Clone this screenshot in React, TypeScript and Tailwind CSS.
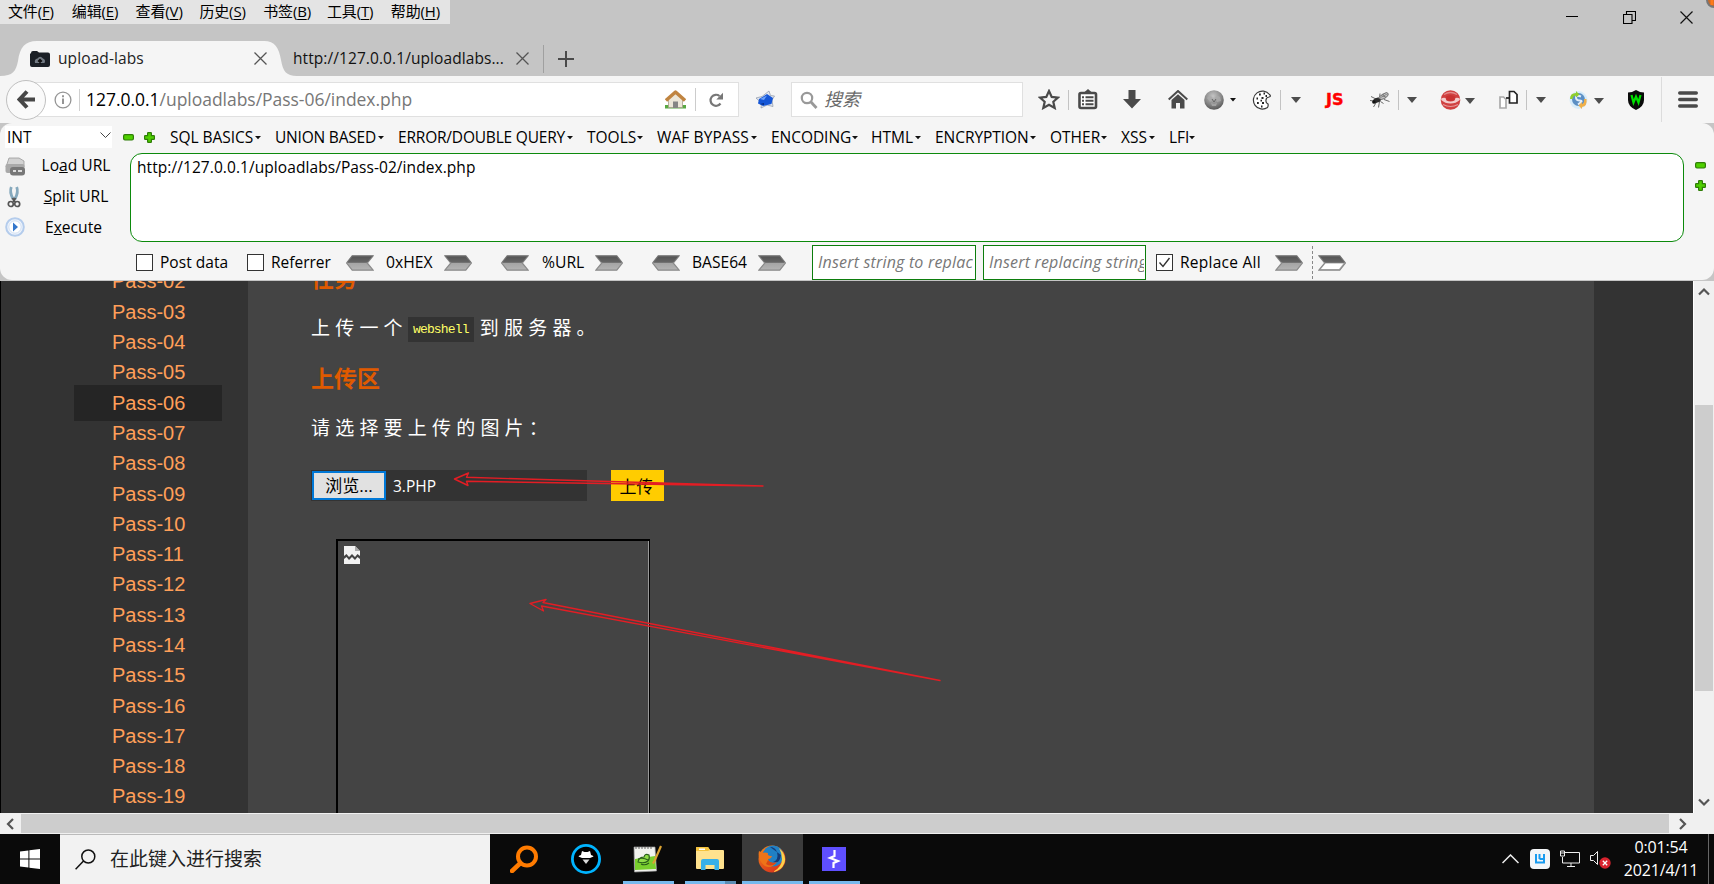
import type { ReactNode } from 'react';

const menus = [
  ['文件', 'F'],
  ['编辑', 'E'],
  ['查看', 'V'],
  ['历史', 'S'],
  ['书签', 'B'],
  ['工具', 'T'],
  ['帮助', 'H'],
];

const hackMenus = [
  { label: 'SQL BASICS', w: 'w-[105px]', t: 'w-[85px] tracking-[-0.05px]' },
  { label: 'UNION BASED', w: 'w-[123px]', t: 'w-[103px] tracking-[-0.2px]' },
  { label: 'ERROR/DOUBLE QUERY', w: 'w-[189px]', t: 'w-[169px] tracking-[-0.2px]' },
  { label: 'TOOLS', w: 'w-[70px]', t: 'w-[50px]' },
  { label: 'WAF BYPASS', w: 'w-[114px]', t: 'w-[94px] tracking-[0.1px]' },
  { label: 'ENCODING', w: 'w-[100px]', t: 'w-[81px] tracking-[-0.05px]' },
  { label: 'HTML', w: 'w-[64px]', t: 'w-[44px]' },
  { label: 'ENCRYPTION', w: 'w-[115px]', t: 'w-[95px] tracking-[-0.05px]' },
  { label: 'OTHER', w: 'w-[71px]', t: 'w-[51px]' },
  { label: 'XSS', w: 'w-[48px]', t: 'w-[28px]' },
  { label: 'LFI', w: 'w-[40px]', t: 'w-[20px]' },
];

const passes = Array.from({ length: 18 }, (_, i) => `Pass-${String(i + 2).padStart(2, '0')}`);

function Caret({ className = '' }: { className?: string }) {
  return (
    <svg className={`shrink-0 ${className}`} width="10" height="6" viewBox="0 0 10 6">
      <path d="M0 0h10L5 6z" fill="#4d4d4d" />
    </svg>
  );
}

function Sep({ className = '' }: { className?: string }) {
  return <div className={`h-5 w-px shrink-0 bg-[#c3c3c3] ${className}`} />;
}

function Cross({ size, color, sw = 1.3 }: { size: number; color: string; sw?: number }) {
  return (
    <svg width={size} height={size} viewBox="0 0 13 13" className="shrink-0">
      <path d="M.5 .5l12 12M12.5 .5l-12 12" stroke={color} strokeWidth={sw} fill="none" />
    </svg>
  );
}

function GreenMinus({ className = '' }: { className?: string }) {
  return (
    <svg className={`shrink-0 ${className}`} width="11" height="7" viewBox="0 0 11 7">
      <rect x=".6" y=".6" width="9.8" height="5.4" rx="1.4" fill="#4fd000" stroke="#2f7d08" strokeWidth="1.2" />
    </svg>
  );
}

function GreenPlus({ className = '' }: { className?: string }) {
  return (
    <svg className={`shrink-0 ${className}`} width="11" height="11" viewBox="0 0 11 11">
      <path d="M3.6 1.2q0-.6.6-.6h2.6q.6 0 .6.6v2.4h2.4q.6 0 .6.6v2.6q0 .6-.6.6H7.400v2.400q0 .6-.6.6H4.200q-.6 0-.6-.6V7.400H1.200q-.6 0-.6-.6V4.200q0-.6.6-.6h2.400z" fill="#4fd000" stroke="#2f7d08" strokeWidth="1.2" />
    </svg>
  );
}

function Chevron({ dir, hollow = false, className = '' }: { dir: 'l' | 'r'; hollow?: boolean; className?: string }) {
  return (
    <svg className={`shrink-0 ${className}`} width="28" height="16" viewBox="0 0 28 16">
      <defs>
        <linearGradient id="chev" x1="0" y1="0" x2="0" y2="1">
          <stop offset="0" stopColor="#4b4b4b" />
          <stop offset=".5" stopColor="#757575" />
          <stop offset=".52" stopColor="#a5a5a5" />
          <stop offset="1" stopColor="#b4b4b4" />
        </linearGradient>
      </defs>
      <g transform={dir === 'l' ? 'matrix(-1 0 0 1 28 0)' : undefined}>
        <path d="M.8 .8h21l5.600 7.200-5.600 7.200H.8l6-7.200z" fill="url(#chev)" stroke="#8a8a8a" strokeWidth="1.200" />
        <path d="M.5 .5h21.500l5 6.500H6z" fill="#5a5a5a" opacity=".5" />
        {hollow && <path d="M7.500 8.500h18L21 14H3z" fill="#fff" />}
      </g>
    </svg>
  );
}

function Check({ checked = false, className = '' }: { checked?: boolean; className?: string }) {
  return (
    <div className={`h-[17px] w-[17px] shrink-0 border border-[#333] bg-white ${className}`}>
      {checked && (
        <svg width="15" height="15" viewBox="0 0 15 15">
          <path d="M2.500 7.500l3.500 4L12.500 3" stroke="#333" strokeWidth="1.400" fill="none" />
        </svg>
      )}
    </div>
  );
}

function Slot({ className, children }: { className: string; children: ReactNode }) {
  return <div className={`shrink-0 whitespace-nowrap ${className}`}>{children}</div>;
}

function TitleBar() {
  return (
    <div className="flex h-[41px] justify-between">
      <div className="flex h-6 w-[450px] items-center bg-[#e4e4e4] pb-[2px] pl-[8px] text-[15px] tracking-[-0.15px]">
        {menus.map(([zh, key]) => (
          <Slot key={key} className="w-[63.800px]">
            {zh}(<u className="underline-offset-2">{key}</u>)
          </Slot>
        ))}
      </div>
      <div className="flex items-start">
        <svg width="12" height="13" viewBox="0 0 12 13" className="mt-[11px]">
          <path d="M0 5.500h12" stroke="#000" />
        </svg>
        <svg width="13" height="13" viewBox="0 0 13 13" className="mt-[11px] ml-[45px]">
          <path d="M.5 3.500h8.500v9h-8.500zM3.500 3.500v-3h9v9h-3.500" stroke="#000" fill="none" strokeWidth="1.100" />
        </svg>
        <div className="mt-[11px] ml-[44px]">
          <Cross size={13} color="#111" sw={1.200} />
        </div>
        <svg width="8" height="9" viewBox="0 0 8 9" className="ml-[13px]">
          <circle cx="8" cy="0" r="7" fill="#c66a2c" stroke="#777" strokeWidth="2" />
          <path d="M6 0v5" stroke="#ff7a1a" strokeWidth="3" />
        </svg>
      </div>
    </div>
  );
}

function TabStrip() {
  return (
    <div className="flex h-[35px]">
      <div className="relative h-[35px] w-[297px] shrink-0">
        <svg className="absolute inset-0" width="297" height="35" viewBox="0 0 297 35">
          <path d="M0 35C13 35 16 30 18 20C20 6 25 0 37 0H264C275 0 279 7 281 19C283 30 286 35 297 35z" fill="#f5f5f5" />
        </svg>
        <div className="relative flex h-[35px] items-center pl-[30px] text-[15.500px] text-[#222]">
          <svg width="20" height="16" viewBox="0 0 20 16" className="shrink-0">
            <path d="M1 2q0-2 2-2h4l2 1.500h9q2 0 2 2V14q0 2-2 2H2q-2 0-2-2V3z" fill="#1b2026" />
            <path d="M5 12q-1-4 2.500-4.500Q10 4 13 7.500q3 1 1.500 4.500z" fill="#737b84" />
            <path d="M10 13V9M8 10.500l2-2 2 2" stroke="#111" strokeWidth="1.500" fill="none" />
          </svg>
          <Slot className="ml-2 w-[196px] tracking-[0.1px]">upload-labs</Slot>
          <Cross size={13} color="#555" />
        </div>
      </div>
      <div className="flex items-center text-[15.500px] text-[#111]">
        <Slot className="-ml-[4px] w-[223px] tracking-[0.08px]">http://127.0.0.1/uploadlabs...</Slot>
        <Cross size={13} color="#555" />
        <div className="mt-px ml-[14px] h-7 w-px bg-[#a0a0a0]" />
        <svg width="16" height="16" viewBox="0 0 16 16" className="ml-[14px]">
          <path d="M8 0v16M0 8h16" stroke="#4a4a4a" strokeWidth="2" />
        </svg>
      </div>
    </div>
  );
}

function NavBar() {
  return (
    <div className="flex h-[47px] items-center bg-[#f5f5f5]">
      <div className="z-10 ml-[6px] flex h-10 w-10 shrink-0 items-center justify-center rounded-full border border-[#c0c0c0] bg-[#fafafa]">
        <svg width="18" height="19" viewBox="0 0 18 19">
          <path d="M10 1.500L2.500 9.500l7.500 8M3 9.500h15" stroke="#474747" strokeWidth="4" fill="none" />
        </svg>
      </div>
      <div className="-ml-[20px] flex h-[35px] w-[713px] shrink-0 items-center border border-[#e0e0e0] bg-white pl-[27px]">
        <svg width="18" height="18" viewBox="0 0 18 18" className="shrink-0">
          <circle cx="9" cy="9" r="7.900" fill="none" stroke="#959595" strokeWidth="1.300" />
          <path d="M9 7.500V13M9 4.200v2" stroke="#959595" strokeWidth="2" />
        </svg>
        <div className="ml-[7px] h-[22px] w-px shrink-0 bg-[#d0d0d0]" />
        <Slot className="ml-[6px] w-[579px] text-[17.500px] tracking-[-0.03px] text-[#777]">
          <span className="text-black">127.0.0.1</span>/uploadlabs/Pass-06/index.php
        </Slot>
        <svg width="21" height="19" viewBox="0 0 21 19" className="shrink-0">
          <path d="M0 15h21v3.500H0z" fill="#58a942" />
          <path d="M3.500 8L10.500 2l7 6v9.500h-14z" fill="#ece6d8" stroke="#a99e8c" strokeWidth=".8" />
          <path d="M1 10.500L10.500 2 20 10.500" stroke="#c08440" strokeWidth="3.400" fill="none" strokeLinejoin="round" />
          <path d="M8 11.500h5v6.500H8z" fill="#858585" />
        </svg>
        <div className="ml-[9px] h-[23px] w-px bg-[#ccc]" />
        <svg width="15" height="16" viewBox="0 0 15 16" className="ml-[13px] shrink-0">
          <path d="M11.500 11.500A5.500 5.500 0 1 1 10.500 4" stroke="#777" strokeWidth="2.200" fill="none" />
          <path d="M14 .8v6.700H7.300z" fill="#777" />
        </svg>
      </div>
      <svg width="20" height="19" viewBox="0 0 20 19" className="ml-[16px] shrink-0">
        <path d="M14 1l1.500 4.500 4 .5-2.500 4 1 6.500-6-1.500-6 3 .5-5L1 8l6-1.500z" fill="#e4e8f0" stroke="#8995a8" strokeWidth=".7" />
        <path d="M4 9l8-5 6 4-1.500 6L8 16l-5-2.500z" fill="#1556d6" />
        <path d="M5 9l7-3.500L9 10z" fill="#6ea2fa" />
        <path d="M5 14l4-1v2z" fill="#0a2d80" />
      </svg>
      <div className="ml-[16px] flex h-[35px] w-[232px] shrink-0 items-center border border-[#e0e0e0] bg-white pl-[8px]">
        <svg width="18" height="18" viewBox="0 0 18 18">
          <circle cx="7" cy="7" r="5.200" stroke="#999" strokeWidth="2.200" fill="none" />
          <path d="M11 11l5.500 6" stroke="#999" strokeWidth="2.800" />
        </svg>
        <span className="ml-[6px] text-[18px] text-[#6a6a6a] italic">搜索</span>
      </div>
      <svg width="22" height="21" viewBox="0 0 22 21" className="ml-[15px] shrink-0">
        <path d="M11 2l2.700 5.900 6.300.7-4.700 4.200 1.400 6.200L11 15.800 5.300 19l1.400-6.200L2 8.600l6.300-.7z" fill="none" stroke="#4a4a4a" strokeWidth="2.200" />
      </svg>
      <Sep className="ml-[8px]" />
      <svg width="20" height="21" viewBox="0 0 20 21" className="ml-[9px] shrink-0">
        <path d="M6 3.500L10 0l4 3.500V4H6z" fill="#4a4a4a" />
        <rect x="1.500" y="4" width="16.500" height="15" rx="1.500" fill="#fff" stroke="#4a4a4a" strokeWidth="2.600" />
        <path d="M4 8.200h2M7.500 8.200h8M4 11.700h2M7.500 11.700h8M4 15.200h2M7.500 15.200h8" stroke="#4a4a4a" strokeWidth="2" />
      </svg>
      <svg width="18" height="19" viewBox="0 0 18 19" className="ml-[25px] shrink-0">
        <path d="M5.500 0h7v9H18l-9 9.500L0 9h5.500z" fill="#4a4a4a" />
      </svg>
      <svg width="20" height="19" viewBox="0 0 20 19" className="ml-[27px] shrink-0">
        <path d="M.7 9.500L10 1l9.300 8.500" stroke="#4a4a4a" strokeWidth="2" fill="none" />
        <path d="M3.500 10L10 4.200l6.500 5.800v8.500h-4.500V13H8v5.500H3.500z" fill="#4a4a4a" />
      </svg>
      <svg width="20" height="20" viewBox="0 0 20 20" className="ml-[16px] shrink-0">
        <defs>
          <radialGradient id="ball" cx=".45" cy=".3" r=".75">
            <stop offset="0" stopColor="#c4c4c4" />
            <stop offset=".6" stopColor="#868686" />
            <stop offset="1" stopColor="#4e4e4e" />
          </radialGradient>
        </defs>
        <circle cx="10" cy="10" r="9.800" fill="url(#ball)" />
        <path d="M3 8q2-3 5-1l1 3-3 2zM11 7q3-2 5 0l1 4-4 1zM7 13l3 1 3-1-1 3H8z" fill="#aaa" opacity=".8" />
        <path d="M8 9l2 3 2-3" stroke="#666" fill="none" />
      </svg>
      <svg width="6" height="4" viewBox="0 0 6 4" className="ml-[6px] shrink-0">
        <path d="M0 0h6L3 3.500z" fill="#111" />
      </svg>
      <svg width="20" height="20" viewBox="0 0 20 20" className="ml-[16px] shrink-0">
        <path d="M17.500 4.500A9 9 0 1 0 15.500 17.500q1-1.500.5-3.500-2.500-1-2-4 0-2.500 3-3 2.500-.5.5-2.500z" fill="#fff" stroke="#3a3a3a" strokeWidth="1.200" />
        <path d="M7 4.500h1.800M11.500 3.500h1.500M13.500 6H15M4.500 8.500H6M9.500 8h2M5 13h1.800M10 13h2M8.500 10.700H10M9 16.500h1.500" stroke="#222" strokeWidth="1.800" />
      </svg>
      <Sep className="ml-[8px]" />
      <Caret className="ml-[10px]" />
      <Slot className="ml-[24px] w-[24px] font-['DejaVu_Sans'] text-[16px] leading-5 font-bold text-[#f00] [-webkit-text-stroke:0.4px_#f00]">
        <span className="ml-px">JS</span>
      </Slot>
      <svg width="20" height="18" viewBox="0 0 20 18" className="ml-[21px] shrink-0">
        <path d="M1 5.500l6 3M3.500 16l3-5M8.500 16.500l1-6M10 2.500l-.5 5M13.500 12.500l-3-2M0 9.500l4 .5M14 8.500l5.500 2" stroke="#444" strokeWidth=".8" fill="none" />
        <path d="M3 9q2-2.500 5-2.500L11 8q0 3-3.500 3.500L4 12.500z" fill="#2a2a2a" />
        <path d="M8.500 7Q11 3 16.500 1.500q2.500.5 1.500 3-3 4-7 4z" fill="#c4c4c4" stroke="#555" strokeWidth=".8" />
        <path d="M10 7l7-4M11 4.500l5 1.500M13 3l2 3.500" stroke="#666" strokeWidth=".6" />
        <circle cx="3.800" cy="11" r="1.700" fill="#111" />
      </svg>
      <Sep className="ml-[8px]" />
      <Caret className="ml-[8px]" />
      <svg width="21" height="20" viewBox="0 0 21 20" className="ml-[23px] shrink-0">
        <circle cx="10.500" cy="10" r="9.800" fill="#d04040" />
        <path d="M4 4.500q6.500-4 13 0" stroke="#e38a8a" strokeWidth="1.300" fill="none" />
        <path d="M1.200 8.500q2-1 4.300-.5l1 2.500q4 2 8 0l1-2.500q2.300-.5 4.300.5v1.500q-4 3.500-9.300 3.500t-9.300-3.500z" fill="#f3cccc" />
        <path d="M6 6.500q4.500-3 9 0l-.5 3.500q-4 2-8 0z" fill="#c93232" />
        <path d="M3 14.500q7.500 4 15 0" stroke="#e69a9a" strokeWidth="1.200" fill="none" />
      </svg>
      <Caret className="mt-[2px] ml-[4px]" />
      <svg width="19" height="20" viewBox="0 0 19 20" className="ml-[24px] shrink-0">
        <path d="M1 7h3.500l2.500 2.500V18H1z" fill="#fff" stroke="#aaa" strokeWidth="1.700" />
        <path d="M10.500 1.500h4.500L18 4.500V13h-7.500z" fill="#fff" stroke="#222" strokeWidth="1.700" />
        <path d="M7 8h3.500" stroke="#222" strokeWidth="1.700" />
      </svg>
      <Sep className="ml-[8px]" />
      <Caret className="ml-[9px]" />
      <svg width="20" height="20" viewBox="0 0 20 20" className="ml-[23px] shrink-0">
        <circle cx="9.500" cy="10" r="9" fill="#d7ecfa" />
        <circle cx="9.500" cy="9.500" r="6.500" fill="#5b8fc4" />
        <path d="M12 6.500q-5-2-5 1t4 3-2 4" stroke="#e4eef9" strokeWidth="2" fill="none" />
        <path d="M1 9Q1 3 7 3V1l3.500 3.500L7 7.500V5.500Q4 5.500 3.500 9z" fill="#8fce2c" />
        <path d="M17.500 9q1 7-4.500 8v2l-3.500-3.500L13 12v2q2.500-.5 2-5z" fill="#f0b04a" />
      </svg>
      <Caret className="mt-[2px] ml-[5px]" />
      <svg width="18" height="20" viewBox="0 0 18 20" className="ml-[23px] shrink-0">
        <path d="M9 0q4 2.500 8 2.500V10q0 6.500-8 10-8-3.500-8-10V2.500Q5 2.500 9 0z" fill="#0a0a0a" />
        <path d="M4.500 5l2 7.500L9 6.500l2.500 6 2-7.500" stroke="#00e000" strokeWidth="2.200" fill="none" />
      </svg>
      <div className="ml-[16px] h-[45px] w-px bg-[#dcdcdc]" />
      <svg width="20" height="17" viewBox="0 0 20 17" className="ml-[16px] shrink-0">
        <path d="M1.700 2h16.600M1.700 8.500h16.600M1.700 15h16.600" stroke="#4a4a4a" strokeWidth="3.400" strokeLinecap="round" />
      </svg>
    </div>
  );
}

function SideAction({ icon, children }: { icon: ReactNode; children: ReactNode }) {
  return (
    <div className="flex h-[31px] items-center pl-[4px]">
      <div className="flex w-[22px] justify-center">{icon}</div>
      <div className="ml-[10px] w-[80px] pb-[2px] text-center text-[15.600px] whitespace-nowrap">{children}</div>
    </div>
  );
}

function HackBar() {
  return (
    <div className="h-[158px] shrink-0 overflow-hidden bg-[#c5c5c5]">
      <div className="flex h-[157px] flex-col rounded-[12px] bg-[#f5f5f5]">
        <div className="flex h-[28px] items-center pl-[5px] text-[15.500px] text-black">
          <div className="flex h-[22px] w-[107px] shrink-0 items-center justify-between bg-white pr-[1px] pl-[2px]">
            <span className="mt-[2px]">INT</span>
            <svg width="11" height="7" viewBox="0 0 11 7" className="mb-1">
              <path d="M.5 .5l5 5 5-5" stroke="#444" fill="none" />
            </svg>
          </div>
          <GreenMinus className="ml-[11px]" />
          <GreenPlus className="ml-[10px]" />
          <div className="mt-[2px] ml-[15px] flex">
            {hackMenus.map((m) => (
              <Slot key={m.label} className={`flex items-center ${m.w}`}>
                <span className={m.t}>{m.label}</span>
                <svg width="6" height="4" viewBox="0 0 6 4" className="shrink-0">
                  <path d="M0 0h6L3 3.200z" fill="#111" />
                </svg>
              </Slot>
            ))}
          </div>
        </div>
        <div className="flex h-[91px] pt-[2px]">
          <div className="-mt-[2px] w-[130px] shrink-0">
            <SideAction
              icon={
                <svg width="21" height="19" viewBox="0 0 21 19">
                  <path d="M4 1h10l5 3v6H1z" fill="#d2d2d2" stroke="#999" strokeWidth=".8" />
                  <rect x=".5" y="7" width="19" height="9" rx="2" fill="#a9a9a9" />
                  <rect x="5" y="10" width="15" height="8.500" rx="3" fill="#777" />
                  <path d="M8 14h3M13 14h4" stroke="#ddd" strokeWidth="2" />
                </svg>
              }
            >
              Lo<u>a</u>d URL
            </SideAction>
            <SideAction
              icon={
                <svg width="14" height="22" viewBox="0 0 14 22" className="mr-[3px] mb-[2px]">
                  <path d="M4.300 1q-2 5 1.700 12M9.700 1q2 5-1.700 12" stroke="#86a9bd" strokeWidth="2.800" fill="none" />
                  <path d="M5.500 12L8 16M8.500 12L6 16" stroke="#555" strokeWidth="2" />
                  <circle cx="3.800" cy="18" r="2.500" fill="none" stroke="#555" strokeWidth="1.700" />
                  <circle cx="10.200" cy="18" r="2.500" fill="none" stroke="#555" strokeWidth="1.700" />
                </svg>
              }
            >
              <u>S</u>plit URL
            </SideAction>
            <SideAction
              icon={
                <svg width="20" height="20" viewBox="0 0 20 20" className="mb-[3px]">
                  <circle cx="10" cy="10" r="8.800" fill="#eef4fc" stroke="#b4ccec" strokeWidth="2" />
                  <circle cx="10" cy="10" r="6.200" fill="#fff" stroke="#d2dff2" />
                  <path d="M8 5.500l5 4.500-5 4.500z" fill="#3577cb" />
                </svg>
              }
            >
              <span className="mr-[5px]">
                E<u>x</u>ecute
              </span>
            </SideAction>
          </div>
          <div className="h-[89px] w-[1554px] shrink-0 rounded-[12px] border border-[#0c8a0c] bg-white pt-[2px] pl-[6px] text-[15.500px] tracking-[0.070px]">
            http://127.0.0.1/uploadlabs/Pass-02/index.php
          </div>
          <div className="mt-[9px] ml-[11px] flex flex-col">
            <GreenMinus />
            <GreenPlus className="mt-[11px]" />
          </div>
        </div>
        <div className="mt-[3px] flex h-[35px] items-center text-[15.500px]">
          <Check className="ml-[136px]" />
          <Slot className="ml-[7px] w-[87px] tracking-[0.050px]">Post data</Slot>
          <Check />
          <Slot className="ml-[7px] w-[75px]">Referrer</Slot>
          <Chevron dir="l" />
          <Slot className="ml-[12px] w-[58px] text-[15.700px]">0xHEX</Slot>
          <Chevron dir="r" />
          <Chevron dir="l" className="ml-[29px]" />
          <Slot className="ml-[13px] w-[53px] text-[15.700px]">%URL</Slot>
          <Chevron dir="r" />
          <Chevron dir="l" className="ml-[29px]" />
          <Slot className="ml-[12px] w-[66px] text-[15.600px]">BASE64</Slot>
          <Chevron dir="r" />
          <div className="ml-[26px] h-[35px] w-[164px] shrink-0 border border-[#0c7d0c] bg-white pr-[2px] pl-[5px] text-[16px] leading-[33px] tracking-[0.180px] text-[#777] italic">
            <div className="overflow-hidden whitespace-nowrap">Insert string to replace</div>
          </div>
          <div className="ml-[7px] h-[35px] w-[163px] shrink-0 border border-[#0c7d0c] bg-white pr-px pl-[5px] text-[16px] leading-[33px] tracking-[0.180px] text-[#777] italic">
            <div className="overflow-hidden whitespace-nowrap">Insert replacing string</div>
          </div>
          <Check checked className="ml-[10px]" />
          <Slot className="ml-[7px] w-[95px] tracking-[0.250px]">Replace All</Slot>
          <Chevron dir="r" />
          <div className="ml-[9px] h-[33px] border-l border-dashed border-[#888]" />
          <Chevron dir="r" hollow className="ml-[5px]" />
        </div>
      </div>
    </div>
  );
}

function Arrow({ d }: { d: string }) {
  return <path d={d} fill="none" stroke="#e31d24" strokeWidth="1.400" strokeLinejoin="round" />;
}

function ScrollArrow({ d }: { d: string }) {
  return (
    <svg width="12" height="12" viewBox="0 0 12 12" className="shrink-0">
      <path d={d} stroke="#555" strokeWidth="2.200" fill="none" />
    </svg>
  );
}

function Page() {
  return (
    <div className="relative flex h-[532px] overflow-hidden bg-[#444] text-white">
      <div className="w-px shrink-0 bg-black" />
      <div className="w-[247px] shrink-0 bg-[#333]">
        <ul className="-mt-[14.600px] font-['Liberation_Sans'] text-[20px] text-[#ff9f59]">
          {passes.map((p) =>
            p === 'Pass-06' ? (
              <li key={p} className="my-[-2.850px] ml-[73px] h-[36px] w-[148px] bg-[#252525] pl-[38px] leading-[37px]">
                {p}
              </li>
            ) : (
              <li key={p} className="h-[30.300px] pl-[111px] leading-[30.300px]">
                {p}
              </li>
            ),
          )}
        </ul>
      </div>
      <div className="flex w-[1346px] shrink-0 flex-col pl-[63px]">
        <h3 className="-mt-[21px] h-[36px] text-[23px] leading-[36px] font-bold text-[#e05a00]">任务</h3>
        <p className="mt-[18px] flex h-[28px] items-center text-[19px] tracking-[5.200px]">
          上传一个
          <code className="mt-[3px] mr-[6px] flex h-[25px] w-[66px] items-center justify-center bg-[#333] font-['Liberation_Mono'] text-[13px] tracking-[-0.850px] text-[#ff6]">
            webshell
          </code>
          到服务器。
        </p>
        <h3 className="mt-[18px] h-[36px] text-[23px] leading-[36px] font-bold text-[#e05a00]">上传区</h3>
        <p className="mt-[18px] h-[28px] text-[19px] leading-[28px] tracking-[5.200px]">请选择要上传的图片：</p>
        <div className="mt-[28px] flex h-[31px] text-[17px]">
          <div className="flex w-[276px] items-center bg-[#333] p-px">
            <div className="flex h-[29px] w-[74px] items-center justify-center border-2 border-[#0078d7] bg-[#e1e1e1] pt-px text-black">浏览...</div>
            <span className="mt-[2px] ml-[7px] text-[15.500px]">3.PHP</span>
          </div>
          <div className="ml-6 flex w-[53px] items-center justify-center bg-[#fc0] pt-[2px] pr-[2px] text-black">上传</div>
        </div>
        <div className="mt-[38px] ml-[25px] flex h-[310px] w-[314px] shrink-0 border-2 border-r-0 border-black">
          <svg width="16" height="18" viewBox="0 0 16 18" className="mt-[5px] ml-[6px]">
            <path d="M0 0h11l5 5v5l-2.500-2-2.500 3-3-3-3 3-2.500-3L0 10z" fill="#f2f2f2" />
            <path d="M11 0v5h5z" fill="#aaa" />
            <path d="M0 13l2.500-2L5 14l3-3 3 3 2.500-3 2.500 2v5H0z" fill="#f2f2f2" />
          </svg>
          <div className="ml-auto w-[2px] border-r border-l border-r-black border-l-[#999]" />
        </div>
      </div>
      <div className="w-[99px] shrink-0 bg-[#333]" />
      <div className="flex w-[21px] shrink-0 flex-col items-center border-l border-white bg-[#f0f0f0] pr-px">
        <div className="flex h-[22px] items-center">
          <ScrollArrow d="M1 8.500l5-5 5 5" />
        </div>
        <div className="mt-[102px] h-[286px] w-[18px] bg-[#cdcdcd]" />
        <div className="mt-auto flex h-[22px] items-center">
          <ScrollArrow d="M1 3.500l5 5 5-5" />
        </div>
      </div>
      <svg className="pointer-events-none absolute inset-0" width="1714" height="532" viewBox="0 281 1714 532">
        <Arrow d="M763 486L466.500 477.300 468.500 473 454.500 479 468 485.500 466.500 481.300z" />
        <Arrow d="M940 680.500L543 602.500 546 599.500 530 603.500 543.500 611 541.500 606z" />
      </svg>
    </div>
  );
}

function Taskbar() {
  return (
    <div className="flex h-[50px] bg-[#0a0a0a] text-white">
      <div className="flex w-[60px] shrink-0 items-center justify-center">
        <svg width="20" height="20" viewBox="0 0 20 20">
          <path d="M0 2.600L8.400 1.400V9.500H0zM9.400 1.200L20 0v9.500H9.400zM0 10.500h8.400v8.100L0 17.400zM9.400 10.500H20V20L9.400 18.800z" fill="#fff" />
        </svg>
      </div>
      <div className="flex w-[430px] shrink-0 items-center border-t border-[#bbb] bg-[#f2f2f2] pl-[15px] text-[19px] text-[#222]">
        <svg width="21" height="21" viewBox="0 0 21 21" className="shrink-0">
          <circle cx="13.300" cy="7.500" r="6.500" stroke="#111" strokeWidth="1.500" fill="none" />
          <path d="M8.500 12L.6 20.200" stroke="#111" strokeWidth="1.500" />
        </svg>
        <span className="ml-[14px]">在此键入进行搜索</span>
      </div>
      <svg width="28" height="28" viewBox="0 0 28 28" className="mt-[11px] ml-[20px] shrink-0">
        <circle cx="17" cy="11.500" r="9" stroke="#ff7b00" strokeWidth="4" fill="none" />
        <path d="M10.500 18L2 26" stroke="#ff7b00" strokeWidth="4.500" strokeLinecap="round" />
      </svg>
      <svg width="30" height="30" viewBox="0 0 30 30" className="mt-[10px] ml-[33px] shrink-0">
        <circle cx="15" cy="15" r="13.600" stroke="#00b4ff" strokeWidth="2.800" fill="#000" />
        <path d="M11 7l2.500 1h3L19 7l1 4q2.500.5 2.500 1.500l-3.500 1.500h-8l-3.500-1.500q0-1 2.500-1.500z" fill="#fff" />
        <path d="M11.500 15.500h7L15 20z" fill="#d8d8d8" />
      </svg>
      <div className="ml-[22px] flex h-[50px] w-[51px] shrink-0 flex-col justify-between">
        <svg width="29" height="28" viewBox="0 0 29 28" className="mt-[11px] ml-[10px]">
          <path d="M1 2h21l1.500 24-22 1z" fill="#f1f2ee" stroke="#999" strokeWidth=".7" />
          <path d="M2 14l20-3 1 13-21 1z" fill="#79cf2d" />
          <path d="M3 2v2M6 2v2M9 2v2M12 2v2M15 2v2M18 2v2" stroke="#666" />
          <path d="M5 17q1-5 6-5 1-4 5-2 1 4-1 6-4 3-10 1zM5 14q5-2 10 1M8 19q4 2 8-1" stroke="#295e1a" strokeWidth="1.100" fill="#8fdd48" />
          <path d="M28 1l-6.500 15-1.500 2.500" stroke="#dca331" strokeWidth="2.200" />
        </svg>
        <div className="h-[3px] w-[51px] bg-[#76b9ed]" />
      </div>
      <div className="ml-[11px] flex h-[50px] w-[51px] shrink-0 flex-col justify-between">
        <svg width="28" height="24" viewBox="0 0 28 24" className="mt-[13px] ml-[11px]">
          <path d="M0 1q0-1 1-1h11l2 3h13q1 0 1 1v17q0 1-1 1H1q-1 0-1-1z" fill="#ffe28e" />
          <path d="M0 1q0-1 1-1h11l2 3-2 1H0z" fill="#f5c33d" />
          <path d="M3 1.500h6v1.500H3z" fill="#fff" />
          <path d="M5 14q0-2 2-2h14q2 0 2 2v9h-4.500v-5h-9v5H5z" fill="#37b0e8" />
        </svg>
        <div className="flex h-[3px] bg-[#76b9ed]">
          <div className="ml-auto w-[11px] bg-[#5b8db4]" />
        </div>
      </div>
      <div className="ml-[6px] flex h-[50px] w-[61px] shrink-0 flex-col items-center justify-between bg-[#3b3b3b]">
        <svg width="28" height="28" viewBox="0 0 28 28" className="mt-[11px] mr-[2px]">
          <defs>
            <linearGradient id="fox" x1="0" y1="0" x2=".7" y2="1">
              <stop offset="0" stopColor="#f08a1c" />
              <stop offset=".6" stopColor="#e4521b" />
              <stop offset="1" stopColor="#d8331c" />
            </linearGradient>
          </defs>
          <circle cx="14" cy="14" r="13.500" fill="url(#fox)" />
          <circle cx="15" cy="11" r="10.500" fill="#2080c4" />
          <path d="M12 2q5 0 7 5 2 8-4 10 7 2 8-7z" fill="#143a77" />
          <path d="M21 3q8 7 5.500 15-3 8-11.500 9 9-5 9-13 0-6-3-11z" fill="#fcd04a" />
          <path d="M1 6q2 1 3 2 3-1 6 0-1 3 4 3-1 3-4 3 1 5 8 4-5 6-11 3Q-1 15 1 6z" fill="#ee7418" />
          <path d="M10 15q3 4 9 2-5 6-11 2z" fill="#d94816" />
        </svg>
        <div className="h-[3px] w-full bg-[#76b9ed]" />
      </div>
      <div className="ml-[6px] flex h-[50px] w-[51px] shrink-0 flex-col justify-between">
        <svg width="24" height="24" viewBox="0 0 24 24" className="mt-[13px] ml-[13px]">
          <path d="M0 0h24v24H0z" fill="#5f4fff" />
          <path d="M12.500 3v6L8 11l8 3-4.500 2v5" stroke="#fff" strokeWidth="2.200" fill="none" />
        </svg>
        <div className="h-[3px] w-full bg-[#76b9ed]" />
      </div>
      <div className="ml-auto flex h-[50px] shrink-0 items-center">
        <svg width="17" height="10" viewBox="0 0 17 10">
          <path d="M.5 9l8-8 8 8" stroke="#eee" strokeWidth="1.500" fill="none" />
        </svg>
        <svg width="20" height="20" viewBox="0 0 20 20" className="ml-[11px]">
          <rect width="20" height="20" rx="4" fill="#f4f6f8" />
          <path d="M6 5v8.500h8V5M9.500 5v5M13 10H9.500" stroke="#1a9cf0" strokeWidth="2" fill="none" />
        </svg>
        <svg width="20" height="18" viewBox="0 0 20 18" className="ml-[10px]">
          <path d="M5 2.500h14.500v10.500H2.500V7M7 16.500h8M11 13v3.500M.5 1h4v5h-4zM1 3h3" stroke="#eee" fill="none" />
        </svg>
        <svg width="21" height="20" viewBox="0 0 21 20" className="ml-[10px]">
          <path d="M.5 6.500h3l4-4v13l-4-4h-3z" stroke="#eee" fill="none" />
          <circle cx="15" cy="14" r="5.700" fill="#d8232e" />
          <path d="M12.800 11.800l4.400 4.400M17.200 11.800l-4.400 4.400" stroke="#fff" strokeWidth="1.300" />
        </svg>
        <div className="ml-[12px] w-[76px] text-center text-[16px] leading-[23px] tracking-[-0.150px] whitespace-nowrap">
          <div>0:01:54</div>
          <div>2021/4/11</div>
        </div>
        <div className="mr-[5px] ml-[9px] h-[50px] w-px bg-[#666]" />
      </div>
    </div>
  );
}

export default function App() {
  return (
    <div className="flex h-[884px] w-[1714px] flex-col overflow-hidden bg-[#c5c5c5] font-['Open_Sans','Noto_Sans_CJK_SC',sans-serif] text-black">
      <TitleBar />
      <TabStrip />
      <NavBar />
      <HackBar />
      <Page />
      <div className="flex h-[21px] items-center bg-[#f0f0f0]">
        <div className="flex w-[21px] justify-center">
          <ScrollArrow d="M8 1l-5 5 5 5" />
        </div>
        <div className="h-[19px] w-[1648px] bg-[#cdcdcd]" />
        <div className="flex w-[27px] justify-center">
          <ScrollArrow d="M3 1l5 5-5 5" />
        </div>
      </div>
      <Taskbar />
    </div>
  );
}
